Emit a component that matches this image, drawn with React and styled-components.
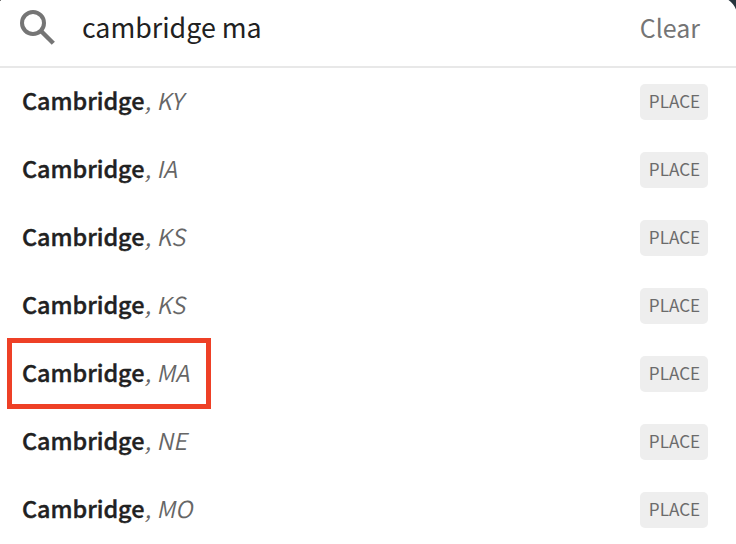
import React from 'react';
import styled, { createGlobalStyle } from 'styled-components';

const GlobalStyle = createGlobalStyle`
  * { box-sizing: border-box; }
  body { margin: 0; background: #fff; overflow: hidden; }
`;

const Panel = styled.main`
  position: relative;
  width: 736px;
  height: 544px;
  overflow: hidden;
  background: #fff;
  font-family: "Noto Sans CJK SC", "Noto Sans", sans-serif;
  color: #212121;
`;

const Corner = styled.svg`
  position: absolute;
  top: 0;
  right: 0;
`;

const LeftCorner = styled.span`
  position: absolute;
  top: 0;
  left: 0;
  width: 1px;
  height: 1px;
  background: #777;
`;

const SearchBar = styled.header`
  display: flex;
  align-items: center;
  height: 68px;
  padding: 0 36px 10px 20px;
  border-bottom: 2px solid #e8e8e8;
`;

const SearchIcon = styled.svg`
  flex: none;
  margin-right: 26px;
`;

const Query = styled.span`
  flex: 1;
  padding-bottom: 2px;
  font-size: 26.8px;
  line-height: 40px;
`;

const Clear = styled.span`
  padding-bottom: 2px;
  font-size: 25px;
  line-height: 40px;
  color: #757575;
`;

const Results = styled.ul`
  margin: 0;
  padding: 0;
  list-style: none;
`;

const Row = styled.li`
  position: relative;
  display: flex;
  align-items: center;
  justify-content: space-between;
  height: 68px;
  padding: 0 28px 0 22px;
`;

const Highlight = styled.span`
  position: absolute;
  top: -2px;
  left: 7px;
  width: 204px;
  height: 71px;
  border: 5px solid #ee4026;
`;

const Label = styled.span`
  display: flex;
  padding-bottom: 4px;
  font-size: 23.4px;
  line-height: 36px;
`;

const City = styled.span`
  width: 124.7px;
  font-weight: 500;
  letter-spacing: -0.04px;
  -webkit-text-stroke: 0.4px currentColor;
`;

const Region = styled.span`
  color: #666;
  font-weight: 350;
  white-space: pre;
  transform: skewX(-12deg);
`;

const Tag = styled.span`
  display: flex;
  align-items: center;
  justify-content: center;
  width: 68px;
  height: 36px;
  padding: 0 0 2px 1px;
  border-radius: 5px;
  background: #eee;
  color: #6b6b6b;
  font-size: 17.1px;
  line-height: 34px;
`;

const places = ['KY', 'IA', 'KS', 'KS', 'MA', 'NE', 'MO'];

export default function App() {
  return (
    <Panel>
      <GlobalStyle />
      <SearchBar>
        <SearchIcon width="36" height="36" viewBox="0 0 36 36" fill="none" stroke="#757575">
          <circle cx="13" cy="13" r="11" strokeWidth="4" />
          <path d="M21.5 21.5L33.3 33.3" strokeWidth="4.4" />
        </SearchIcon>
        <Query>cambridge ma</Query>
        <Clear>Clear</Clear>
      </SearchBar>
      <Results>
        {places.map((region, i) => (
          <Row key={i}>
            <Label>
              <City>Cambridge</City>
              <Region>, {region}</Region>
            </Label>
            <Tag>PLACE</Tag>
            {region === 'MA' && <Highlight />}
          </Row>
        ))}
      </Results>
      <LeftCorner />
      <Corner width="8" height="10" viewBox="0 0 8 10">
        <path d="M0.5 0H8V9.5C6.5 5.5 4 2.5 0.5 0Z" fill="#26343c" />
      </Corner>
    </Panel>
  );
}
